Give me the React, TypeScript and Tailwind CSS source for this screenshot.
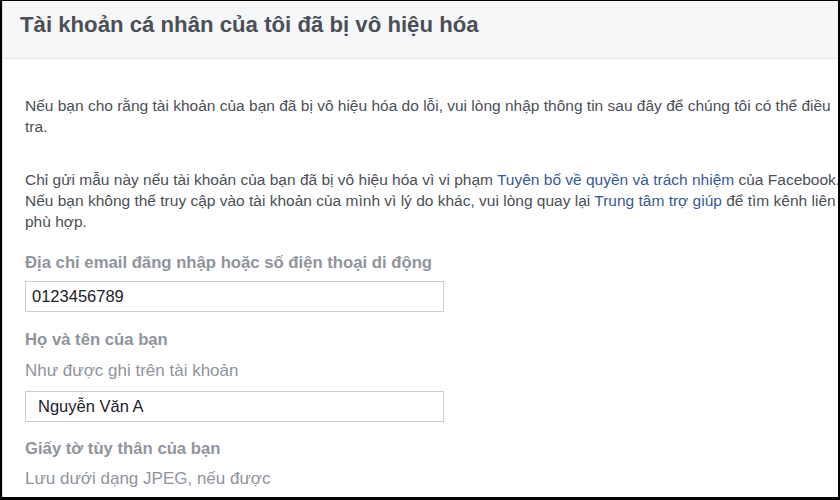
const sans = { fontFamily: '"Liberation Sans", Arial, sans-serif' };

const Field = ({ value, pad, mt }: { value: string; pad: string; mt: string }) => (
  <div
    className={`${mt} h-[31px] w-[419px] border border-[#c9ccd1] bg-white ${pad} flex items-center text-[16.5px] text-[#1d2129]`}
  >
    {value}
  </div>
);

const App = () => {
  return (
    <div
      className="w-[840px] h-[500px] overflow-hidden bg-black pt-px pl-[2px] pr-[2px] pb-[3px]"
      style={sans}
    >
      <div className="h-full w-full overflow-hidden bg-white border-l border-[#dddfe2]">
        {/* header */}
        <div className="h-[58px] bg-[#f6f7f9] border-b border-[#e5e6e9] pl-[17px] pt-[10px]">
          <h1 className="text-[22.2px] leading-[28px] font-bold text-[#4b4f56] whitespace-nowrap">
            Tài khoản cá nhân của tôi đã bị vô hiệu hóa
          </h1>
        </div>

        {/* body */}
        <div className="pl-[22px] pt-[36px] text-[15.5px] leading-[21px] text-[#4b4f56] whitespace-nowrap">
          <p>
            Nếu bạn cho rằng tài khoản của bạn đã bị vô hiệu hóa do lỗi, vui lòng nhập thông tin sau đây để chúng tôi có thể điều
            <br />
            tra.
          </p>
          <p className="mt-[32px]">
            Chỉ gửi mẫu này nếu tài khoản của bạn đã bị vô hiệu hóa vì vi phạm{" "}
            <span className="text-[#365899]">Tuyên bố về quyền và trách nhiệm</span> của Facebook.
            <br />
            Nếu bạn không thể truy cập vào tài khoản của mình vì lý do khác, vui lòng quay lại{" "}
            <span className="text-[#365899]">Trung tâm trợ giúp</span> để tìm kênh liên hệ
            <br />
            phù hợp.
          </p>

          <div className="mt-[20px] text-[16.7px] leading-[22px] font-bold text-[#90949c]">
            Địa chỉ email đăng nhập hoặc số điện thoại di động
          </div>
          <Field value="0123456789" pad="pl-[6px]" mt="mt-[7px]" />

          <div className="mt-[17px] text-[16.7px] leading-[22px] font-bold text-[#90949c]">
            Họ và tên của bạn
          </div>
          <div className="mt-[9px] text-[17px] leading-[22px] text-[#90949c]">Như được ghi trên tài khoản</div>
          <Field value="Nguyễn Văn A" pad="pl-[12px]" mt="mt-[9px]" />

          <div className="mt-[16px] text-[16.7px] leading-[22px] font-bold text-[#90949c]">
            Giấy tờ tùy thân của bạn
          </div>
          <div className="mt-[8px] text-[17px] leading-[22px] text-[#90949c]">Lưu dưới dạng JPEG, nếu được</div>
        </div>
      </div>
    </div>
  );
};

export default App;
